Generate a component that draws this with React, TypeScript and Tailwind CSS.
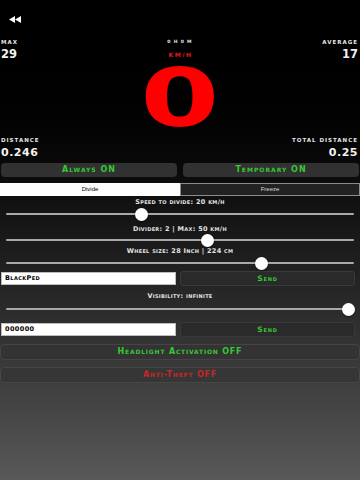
import React from "react";

const caps = "[font-variant:small-caps] font-bold";

function Slider({ pos }: { pos: number }) {
  return (
    <div className="relative h-[14px] mx-[6px]">
      <div className="absolute left-0 right-0 top-[6px] h-[2px] bg-[#a9a9a9] rounded-full" />
      <div
        className="absolute top-[0.5px] w-[13px] h-[13px] -ml-[6.5px] rounded-full bg-white shadow-[0_1px_2px_rgba(0,0,0,0.5)]"
        style={{ left: `${pos}%` }}
      />
    </div>
  );
}

function Label({ text, className = "" }: { text: string; className?: string }) {
  return (
    <div className={`h-[6px] leading-[6px] text-center text-[6.5px] tracking-[0.3px] text-[#e2e2e2] ${caps} ${className}`}>
      {text}
    </div>
  );
}

function SendRow({ value, className = "" }: { value: string; className?: string }) {
  return (
    <div className={`flex items-center h-[15px] pl-[1px] pr-[5px] gap-[4px] ${className}`}>
      <div className="w-[175px] h-[13px] bg-white border border-[#bdbdbd] flex items-center pl-[3px] text-[6.5px] text-black tracking-[0.4px] [font-variant:small-caps] font-bold">
        {value}
      </div>
      <button className="flex-1 h-[15px] rounded-[3px] bg-[#2a2a2a] border border-[#3a3a3a] text-[#35c935] text-[7.5px] tracking-[0.8px] [font-variant:small-caps] font-bold">
        Send
      </button>
    </div>
  );
}

export default function App() {
  return (
    <div
      className="w-[360px] h-[480px] overflow-hidden bg-gradient-to-b from-black from-[6%] to-[#595959] text-white flex flex-col"
      style={{ fontFamily: '"DejaVu Sans", "Liberation Sans", sans-serif' }}
    >
      {/* back */}
      <div className="h-[37px] pt-[16px] pl-[9px]">
        <svg width="12" height="7" viewBox="0 0 12 7" fill="white">
          <polygon points="0,3.5 6,0 6,7" />
          <polygon points="6,3.5 12,0 12,7" />
        </svg>
      </div>

      {/* max / km/h / average */}
      <div className="flex justify-between px-[1px] pr-[2px] h-[10px] items-center font-bold text-[5.5px] tracking-[1px] text-[#e6e6e6]">
        <span className="w-[60px]">MAX</span>
        <span className="text-[4.5px] tracking-[3.2px] pl-[3px]">0H0M</span>
        <span className="w-[60px] text-right">AVERAGE</span>
      </div>
      <div className="flex justify-between px-[1px] pr-[2px] h-[15px] items-center font-bold">
        <span className="w-[60px] text-[11.5px] text-[#f2f2f2]">29</span>
        <span className="text-[6px] tracking-[1.5px] text-[#e31b1b] pl-[2px]">KM/H</span>
        <span className="w-[60px] text-right text-[11.5px] text-[#f2f2f2]">17</span>
      </div>

      {/* speed */}
      <div className="h-[73px] flex items-center justify-center">
        <span className="h-[62px] leading-[62px] text-[80px] font-bold text-[#ff0000] scale-x-[1.42] inline-block overflow-visible">
          0
        </span>
      </div>

      {/* distance */}
      <div className="flex justify-between px-[1px] pr-[2px] h-[11px] items-center font-bold text-[5.5px] tracking-[1px] text-[#e6e6e6]">
        <span>DISTANCE</span>
        <span>TOTAL DISTANCE</span>
      </div>
      <div className="flex justify-between px-[1px] pr-[2px] h-[15px] items-center font-bold text-[11px] tracking-[0.5px] text-[#f2f2f2]">
        <span>0.246</span>
        <span>0.25</span>
      </div>

      {/* light mode */}
      <div className="mt-[2px] flex gap-[6px] px-[1px] h-[14px]">
        <button className="flex-1 rounded-[4px] bg-[#313131] text-[#35c935] text-[8px] tracking-[1px] [font-variant:small-caps] font-bold">
          Always ON
        </button>
        <button className="flex-1 rounded-[4px] bg-[#313131] text-[#35c935] text-[8px] tracking-[1px] [font-variant:small-caps] font-bold">
          Temporary ON
        </button>
      </div>

      {/* segmented */}
      <div className="mt-[6px] flex h-[13px] text-[6px]" style={{ fontFamily: '"Liberation Sans", sans-serif' }}>
        <div className="w-[180px] bg-white text-black flex items-center justify-center">Divide</div>
        <div className="flex-1 border border-[#8c8c8c] bg-[#222] text-[#d6d6d6] flex items-center justify-center">Freeze</div>
      </div>

      <Label text="Speed to divide: 20 km/h" className="mt-[3px]" />
      <div className="mt-[2px]">
        <Slider pos={39} />
      </div>
      <Label text="Divider: 2 | Max: 50 km/h" className="mt-[5px]" />
      <div className="mt-[1px]">
        <Slider pos={58} />
      </div>
      <Label text="Wheel size: 28 Inch | 224 cm" className="mt-[1px]" />
      <div className="mt-[2px]">
        <Slider pos={73.5} />
      </div>

      <SendRow value="BlackPed" className="mt-[1px]" />

      <Label text="Visibility: infinite" className="mt-[7px]" />
      <div className="mt-[3px]">
        <Slider pos={98.5} />
      </div>

      <SendRow value="000000" className="mt-[6px]" />

      <button className="mt-[7px] mx-0 h-[16px] rounded-[4px] bg-[#333] border border-[#444] text-[#35c935] text-[8px] tracking-[0.8px] [font-variant:small-caps] font-bold">
        Headlight Activation OFF
      </button>
      <button className="mt-[7px] mx-0 h-[16px] rounded-[4px] bg-[#363636] border border-[#474747] text-[#c62828] text-[8px] tracking-[0.8px] [font-variant:small-caps] font-bold">
        Anti-Theft OFF
      </button>
    </div>
  );
}
